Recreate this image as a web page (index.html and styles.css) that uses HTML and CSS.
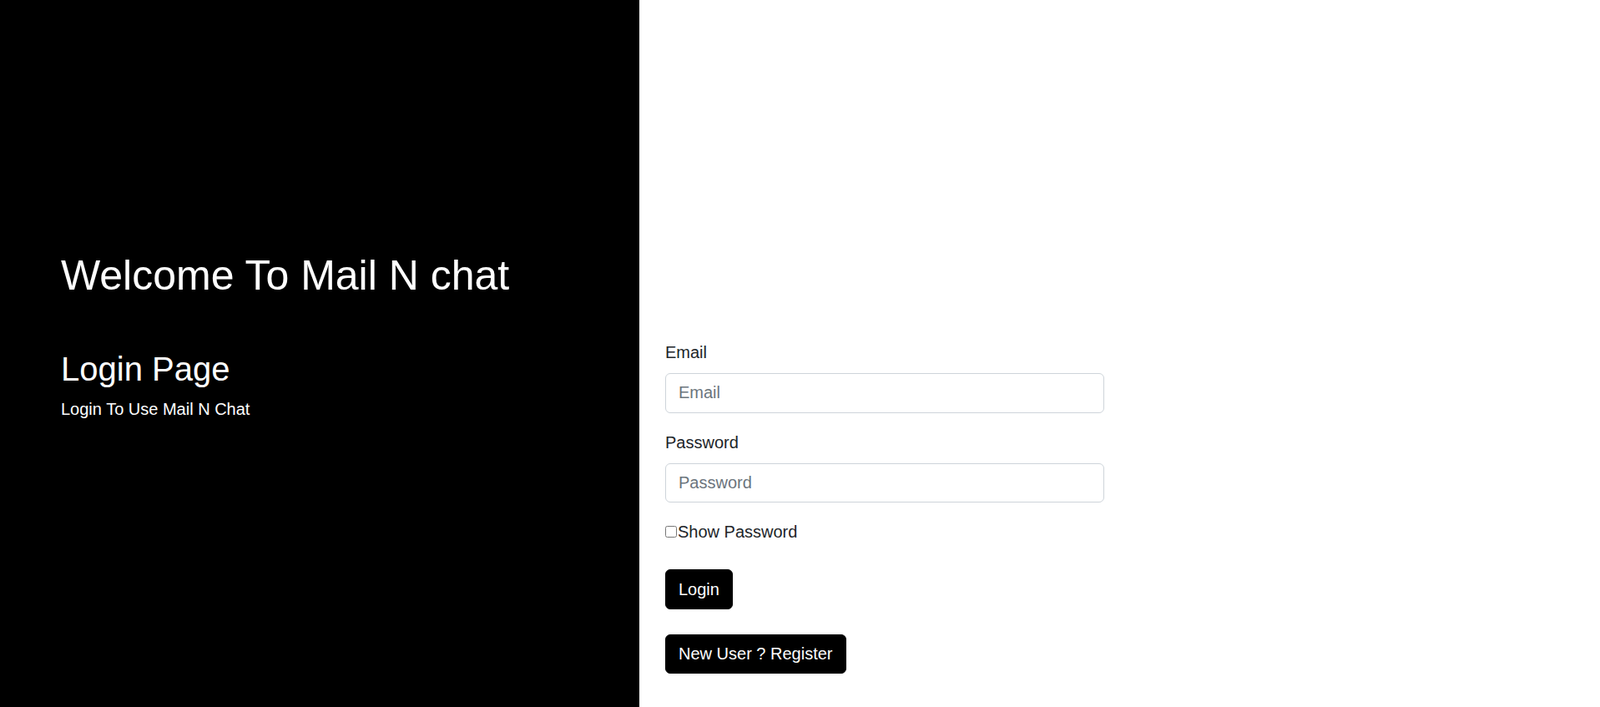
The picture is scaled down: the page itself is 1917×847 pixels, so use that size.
FILE: index.html
```html
<!DOCTYPE html>
<html lang="en">
<head>
<meta charset="utf-8">
<title>Login - Mail N Chat</title>
<link rel="stylesheet" href="styles.css">
</head>
<body>
<div class="page">
  <section class="intro">
    <h1 class="intro-title">Welcome To Mail N chat</h1>
    <h2 class="intro-sub">Login Page</h2>
    <p class="intro-text">Login To Use Mail N Chat</p>
  </section>
  <section class="login">
    <form class="login-form">
      <div class="field">
        <label class="field-label" for="email">Email</label>
        <input class="field-input" id="email" type="email" placeholder="Email">
      </div>
      <div class="field">
        <label class="field-label" for="password">Password</label>
        <input class="field-input" id="password" type="password" placeholder="Password">
      </div>
      <div class="show-row">
        <input class="show-check" id="show" type="checkbox"><label for="show">Show Password</label>
      </div>
      <div class="actions">
        <button class="btn" type="button">Login</button>
        <button class="btn" type="button">New User ? Register</button>
      </div>
    </form>
  </section>
</div>
</body>
</html>
```
FILE: styles.css
```css
* { box-sizing: border-box; }
html, body { margin: 0; padding: 0; }
body {
  font-family: "Liberation Sans", Arial, sans-serif;
  font-size: 20px;
  line-height: 1.5;
  color: #212529;
  background: #fff;
}
.page {
  display: flex;
  min-height: 100vh;
}
.intro {
  flex: none;
  width: 766px;
  background: #000;
  color: #fff;
  padding: 300px 0 0 73px;
}
.intro-title {
  font-size: 50px;
  font-weight: 400;
  line-height: 1.2;
  margin: 0 0 58px;
}
.intro-sub {
  font-size: 40px;
  font-weight: 400;
  line-height: 1.2;
  margin: 0 0 9px;
}
.intro-text {
  font-size: 20px;
  line-height: 30px;
  margin: 0;
}
.login {
  flex: 1;
  padding: 407px 0 0 31px;
}
.login-form {
  width: 526px;
}
.field {
  margin-bottom: 20px;
}
.field-label {
  display: block;
  margin-bottom: 10px;
  line-height: 30px;
}
.field-input {
  display: block;
  width: 100%;
  height: 47.5px;
  padding: 7.5px 15px;
  border: 1px solid #ced4da;
  border-radius: 6px;
  font-family: inherit;
  font-size: 20px;
  line-height: 30px;
  color: #212529;
  background: #fff;
}
.field-input::placeholder {
  color: #6c757d;
}
.show-row {
  line-height: 30px;
}
.show-check {
  width: 14px;
  height: 14px;
  margin: 0 1px 1px 0;
  vertical-align: baseline;
}
.actions {
  display: flex;
  flex-direction: column;
  align-items: flex-start;
  gap: 30px;
  margin-top: 30px;
}
.btn {
  height: 47.5px;
  padding: 7.5px 15px;
  border: 1px solid #000;
  border-radius: 6px;
  background: #000;
  color: #fff;
  font-family: inherit;
  font-size: 20px;
  line-height: 30px;
  cursor: pointer;
}
```
